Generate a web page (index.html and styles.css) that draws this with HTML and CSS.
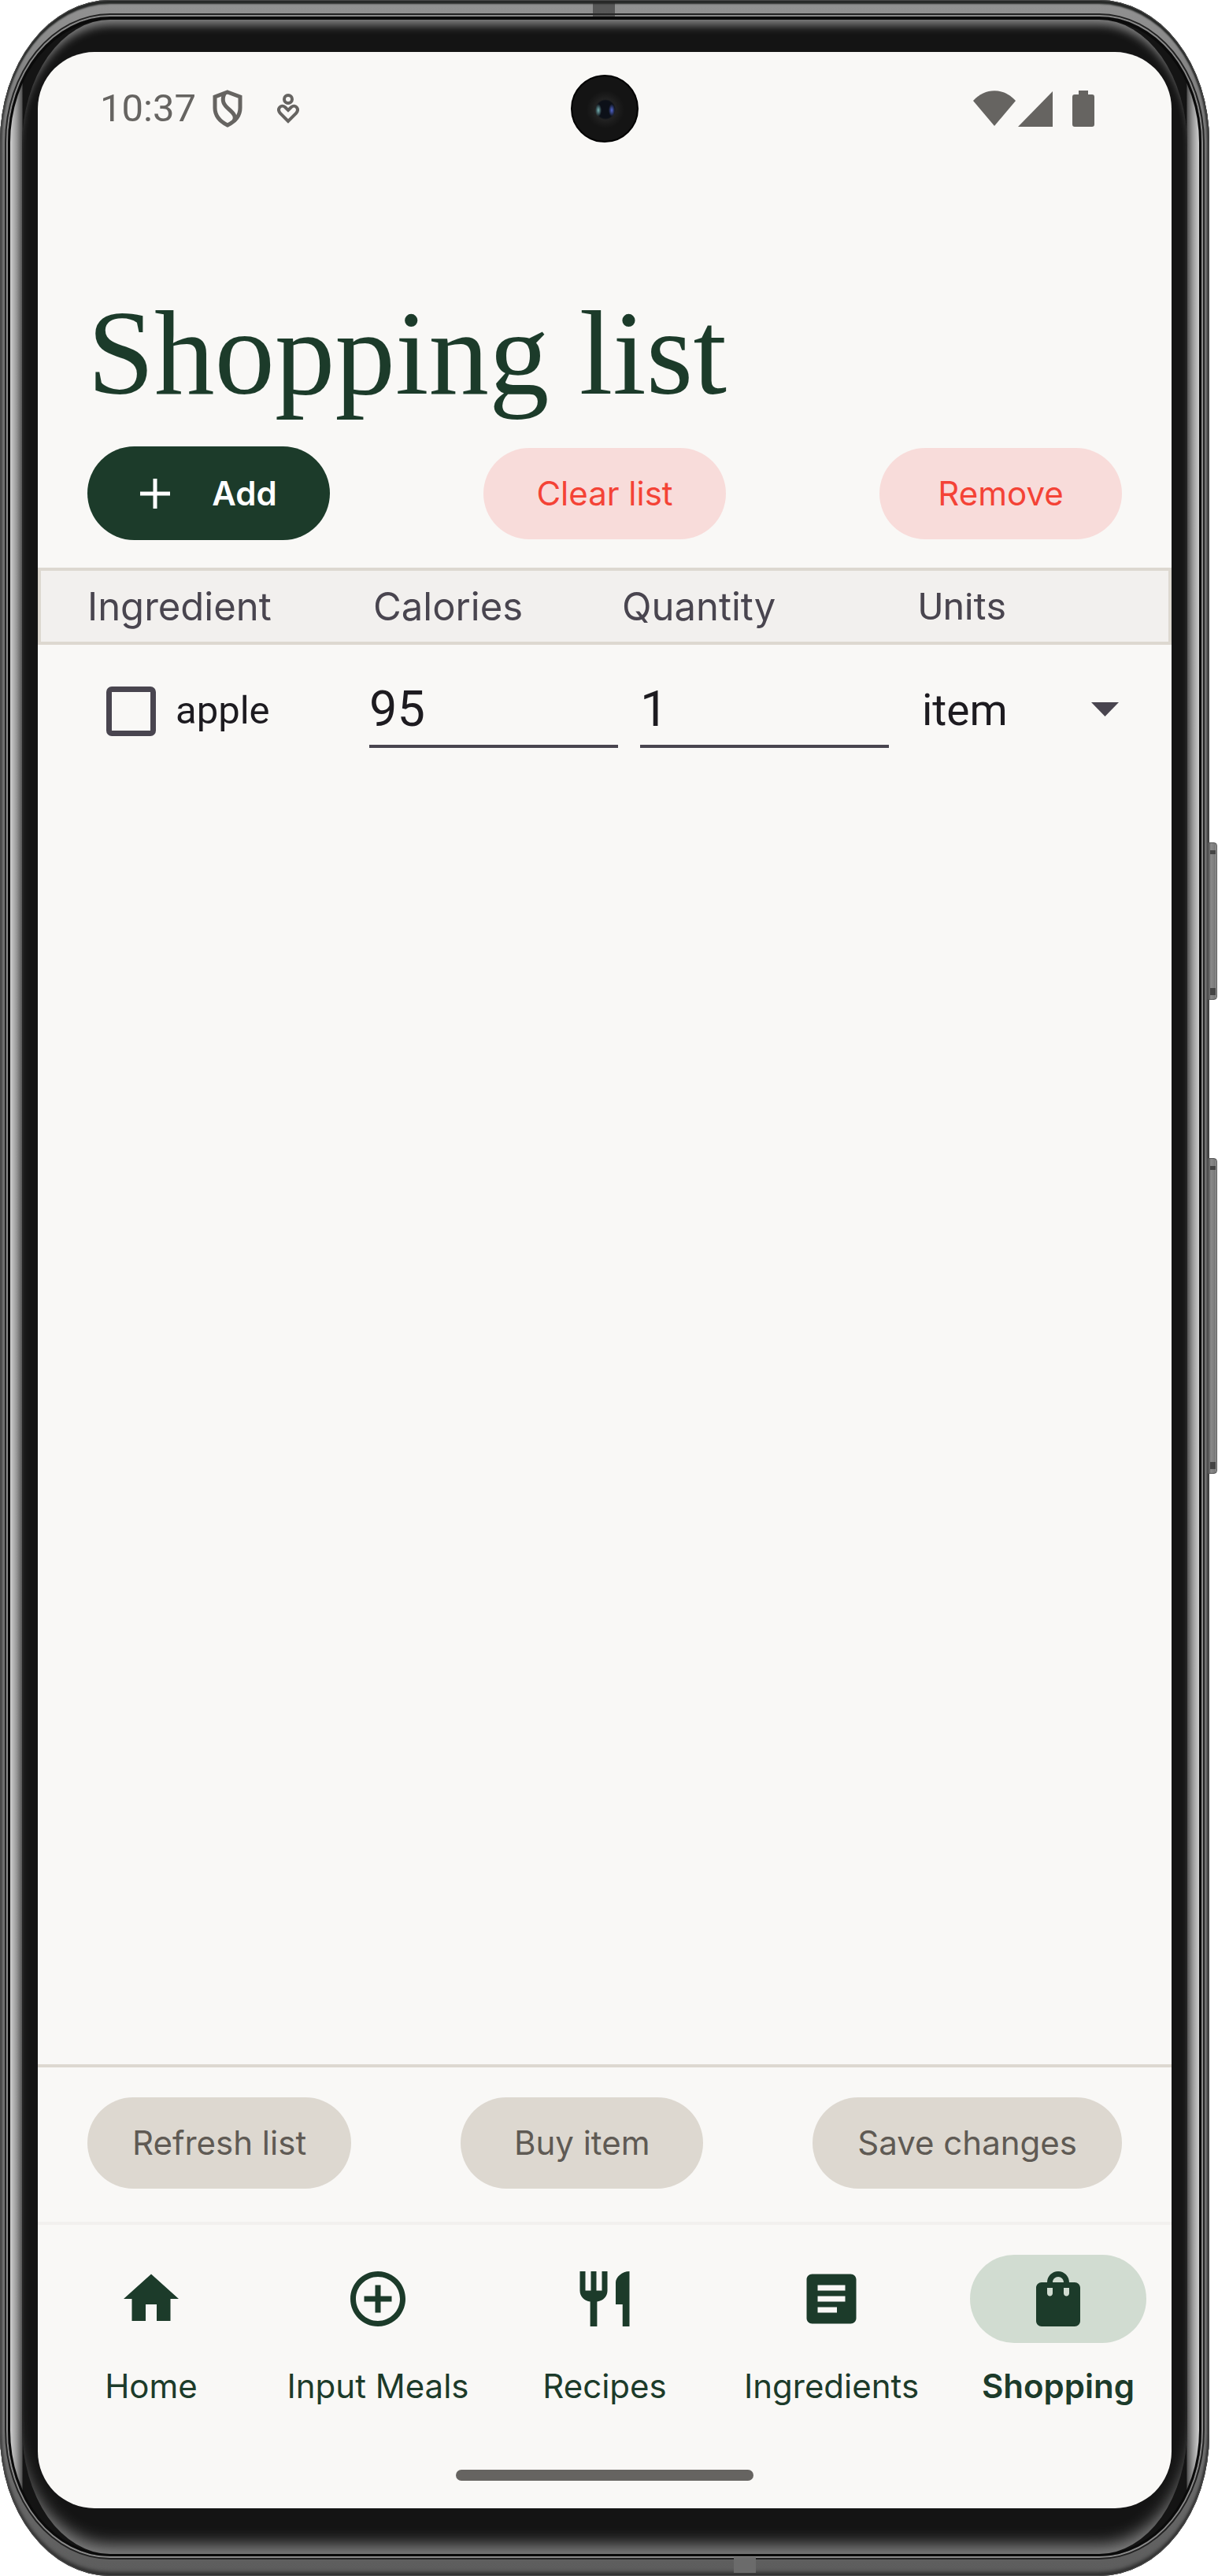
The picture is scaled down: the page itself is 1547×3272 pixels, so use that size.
FILE: index.html
```html
<!DOCTYPE html>
<html lang="en">
<head>
<meta charset="utf-8">
<meta name="viewport" content="width=device-width, initial-scale=1">
<title>Shopping list</title>
<link rel="stylesheet" href="styles.css">
</head>
<body>
<div class="phone">
  <span class="band band-top"></span>
  <span class="band band-bottom"></span>
  <span class="side-button side-power"></span>
  <span class="side-button side-volume"></span>
  <div class="bezel">
    <div class="glass">
      <div class="screen">
        <span class="camera"></span>

        <div class="status">
          <div class="status-group">
            <span class="clock">10:37</span>
            <svg class="icon-shield" viewBox="0 0 40 48" aria-hidden="true">
              <path d="M20 3 L36 9 V23 C36 34 28 41 20 45 C12 41 4 34 4 23 V9 Z" fill="none" stroke="currentColor" stroke-width="5"/>
              <path d="M16 5 C12 14 15 19 22 25 C29 31 31 35 28 40" fill="none" stroke="currentColor" stroke-width="5"/>
            </svg>
            <svg class="icon-heart" viewBox="0 0 28 40" aria-hidden="true" fill="none" stroke="currentColor" stroke-width="4">
              <circle cx="14" cy="8" r="5"/>
              <path d="M14 36 L4 26 C-1 20 5 14 10 18 L14 22 L18 18 C23 14 29 20 24 26 Z"/>
            </svg>
          </div>
          <div class="status-group status-right">
            <svg class="icon-wifi" viewBox="0 0 54 46" aria-hidden="true"><path d="M0 13 C15 -4 39 -4 54 13 L27 45 Z" fill="currentColor"/></svg>
            <svg class="icon-signal" viewBox="0 0 44 46" aria-hidden="true"><path d="M44 1 V46 H0 Z" fill="currentColor"/></svg>
            <svg class="icon-battery" viewBox="0 0 28 46" aria-hidden="true"><path d="M8 0 H20 V5 H25 Q28 5 28 8 V43 Q28 46 25 46 H3 Q0 46 0 43 V8 Q0 5 3 5 H8 Z" fill="currentColor"/></svg>
          </div>
        </div>

        <main>
          <h1>Shopping list</h1>

          <div class="actions">
            <button type="button" class="btn btn-add">
              <svg class="icon-plus" viewBox="0 0 38 38" aria-hidden="true"><path d="M19 0 V38 M0 19 H38" stroke="currentColor" stroke-width="5"/></svg>
              Add
            </button>
            <button type="button" class="btn btn-danger">Clear list</button>
            <button type="button" class="btn btn-danger">Remove</button>
          </div>

          <table class="list">
            <thead>
              <tr><th scope="col">Ingredient</th><th scope="col">Calories</th><th scope="col">Quantity</th><th scope="col" class="head-units">Units</th></tr>
            </thead>
            <tbody>
              <tr>
                <td><label class="pick"><input type="checkbox">apple</label></td>
                <td class="cell-calories"><input class="field" type="text" value="95" aria-label="Calories"></td>
                <td class="cell-quantity"><input class="field" type="text" value="1" aria-label="Quantity"></td>
                <td><div class="unit"><select aria-label="Units"><option>item</option></select></div></td>
              </tr>
            </tbody>
          </table>
        </main>

        <div class="footer-actions">
          <button type="button" class="btn btn-muted">Refresh list</button>
          <button type="button" class="btn btn-muted">Buy item</button>
          <button type="button" class="btn btn-muted">Save changes</button>
        </div>

        <nav>
          <a href="#home"><span class="pill"><svg viewBox="0 0 24 24" aria-hidden="true"><path d="M10 20v-6h4v6h5v-8h3L12 3 2 12h3v8z"/></svg></span>Home</a>
          <a href="#meals"><span class="pill"><svg viewBox="0 0 24 24" aria-hidden="true"><path d="M13 7h-2v4H7v2h4v4h2v-4h4v-2h-4V7zm-1-5C6.480 2 2 6.480 2 12s4.480 10 10 10 10-4.480 10-10S17.520 2 12 2zm0 18c-4.410 0-8-3.590-8-8s3.590-8 8-8 8 3.590 8 8-3.590 8-8 8z"/></svg></span>Input Meals</a>
          <a href="#recipes"><span class="pill"><svg viewBox="0 0 24 24" aria-hidden="true"><path d="M11 9H9V2H7v7H5V2H3v7c0 2.120 1.660 3.840 3.750 3.970V22h2.500v-9.030C11.340 12.840 13 11.120 13 9V2h-2v7zm5-3v8h2.500v8H21V2c-2.760 0-5 2.240-5 4z"/></svg></span>Recipes</a>
          <a href="#ingredients"><span class="pill"><svg viewBox="0 0 24 24" aria-hidden="true"><path d="M19 3H5c-1.100 0-2 .9-2 2v14c0 1.100.9 2 2 2h14c1.100 0 2-.9 2-2V5c0-1.100-.9-2-2-2zm-5 14H7v-2h7v2zm3-4H7v-2h10v2zm0-4H7V7h10v2z"/></svg></span>Ingredients</a>
          <a href="#shopping" class="active" aria-current="page"><span class="pill"><svg viewBox="0 0 24 24" aria-hidden="true"><path d="M18 6h-2c0-2.210-1.790-4-4-4S8 3.790 8 6H6c-1.100 0-2 .9-2 2v12c0 1.100.9 2 2 2h12c1.100 0 2-.9 2-2V8c0-1.100-.9-2-2-2zm-8 4c0 .55-.45 1-1 1s-1-.45-1-1V8h2v2zm2-6c1.100 0 2 .9 2 2h-4c0-1.100.9-2 2-2zm4 6c0 .55-.45 1-1 1s-1-.45-1-1V8h2v2z"/></svg></span>Shopping</a>
        </nav>
        <div class="gesture"></div>
      </div>
    </div>
  </div>
</div>
</body>
</html>
```
FILE: styles.css
```css
:root {
  --paper: #f9f8f6;
  --green: #1c3b2a;
  --line: #ddd8d0;
  --slate: #49454f;
  --ink: #1d1b20;
  --status: #666461;
  --gutter: 63px;
}

* { box-sizing: border-box; }

body {
  margin: 0;
  padding-right: 11px;
  min-height: 100vh;
  display: flex;
  background: #fff;
  font-family: Inter, "Liberation Sans", sans-serif;
  font-size: 42px;
  line-height: 50px;
}

button, input, select { font: inherit; margin: 0; }

/* Device body */
.phone {
  position: relative;
  flex: 1;
  display: flex;
  padding: 21px 10px 25px;
  border-radius: 140px / 180px;
  background: linear-gradient(#929292, #747474 200px, #747474 calc(100% - 200px), #5c5c5c);
  box-shadow:
    inset 0 0 0 1px #4a4a4a,
    inset 0 5px 2px #262827,
    inset 0 -5px 4px #303030,
    inset -3px 0 2px #444,
    inset 3px 0 2px #555;
}

.bezel {
  flex: 1;
  display: flex;
  border: solid #0a0a0a;
  border-width: 4px 3px 3px;
  border-radius: 130px / 160px;
  background: linear-gradient(90deg, #d0d0d0, #999 8px, #555 15px, #141414 16px, #141414 calc(100% - 16px), #555 calc(100% - 15px), #999 calc(100% - 8px), #d0d0d0);
  box-shadow: 0 0 0 2px #8a8a8a, 0 0 0 4px #222;
}

.glass {
  flex: 1;
  display: flex;
  margin: 0 15px;
  padding: 41px 20px 58px;
  border-radius: 112px / 160px;
  background: #141414;
  box-shadow:
    inset 0 15px 12px -8px #808080,
    inset 0 -24px 20px -12px #808080;
}

.band {
  position: absolute;
  width: 28px;
  height: 20px;
  background: rgba(40, 40, 40, .55);
}
.band-top { top: 1px; left: 753px; }
.band-bottom { bottom: 4px; left: 932px; background: #6b6b6b; }

.side-button {
  position: absolute;
  right: -10px;
  width: 12px;
  border-radius: 0 4px 4px 0;
  border: 1px solid #555;
  background: linear-gradient(90deg, #555, #8a8a8a 3px, #777 9px, #bbb);
}
.side-button::before, .side-button::after {
  content: "";
  position: absolute;
  left: 2px;
  width: 7px;
  height: 5px;
  background: #444;
}
.side-button::before { top: 9px; }
.side-button::after { bottom: 5px; height: 9px; }
.side-power { top: 1070px; height: 200px; }
.side-volume { top: 1471px; height: 401px; }

.screen {
  position: relative;
  flex: 1;
  min-width: 0;
  display: flex;
  flex-direction: column;
  border-radius: 72px;
  background: var(--paper);
  color: var(--green);
}

.camera {
  position: absolute;
  top: 29px;
  left: calc(50% - 43px);
  width: 86px;
  height: 86px;
  border: 2px solid #000;
  border-radius: 50%;
  background:
    radial-gradient(ellipse 4px 8px at 33px 43px, #78b4b4, transparent),
    radial-gradient(ellipse 4px 8px at 50px 43px, #5468d0, transparent),
    radial-gradient(circle at 42px 42px, #0c1018 11px, #222 13px, #1b1b1b 18px, #141414 24px);
}

/* Status bar */
.status {
  display: flex;
  justify-content: space-between;
  align-items: center;
  height: 144px;
  padding: 0 98px 0 79px;
  color: var(--status);
}
.status-group { display: flex; align-items: center; }
.status-right { gap: 3px; }
.clock { font-family: Roboto, sans-serif; font-size: 49px; }
.icon-shield { width: 40px; height: 48px; margin-left: 20px; }
.icon-heart { width: 28px; height: 40px; margin-left: 43px; }
.icon-wifi { width: 54px; height: 46px; }
.icon-signal { width: 44px; height: 46px; }
.icon-battery { width: 28px; height: 46px; margin-left: 22px; }

/* Content */
main { flex: 1; }

h1 {
  margin: 0;
  padding: 159px var(--gutter) 38px;
  font-family: "Liberation Serif", serif;
  font-size: 153px;
  font-weight: 400;
  line-height: 160px;
}

.actions, .footer-actions {
  display: flex;
  justify-content: space-between;
  align-items: center;
  padding: 0 var(--gutter);
}
.actions { padding-bottom: 35px; }
.footer-actions {
  padding-top: 38px;
  padding-bottom: 42px;
  border-top: 4px solid var(--line);
}

.btn {
  display: flex;
  align-items: center;
  justify-content: center;
  min-width: 308px;
  height: 116px;
  padding: 0 57px;
  border: 0;
  border-radius: 60px;
}
.btn-add {
  gap: 53px;
  height: 119px;
  background: var(--green);
  color: #fff;
  font-weight: 600;
}
.icon-plus { width: 38px; height: 38px; }
.btn-danger { background: #f8dcda; color: #f44336; }
.btn-muted { background: var(--line); color: #5f5a54; }

/* Ingredient table */
.list, .list thead, .list tbody { display: block; }
.list tr { display: grid; }
.list td, .list th { padding: 0; text-align: left; font-weight: 400; }
.list thead tr {
  grid-template-columns: 363fr 316fr 376fr 259fr;
  padding: 16px 59px 15px;
  border: 4px solid var(--line);
  background: #f2f0ee;
  color: var(--slate);
  font-size: 49px;
  line-height: 59px;
}
.list .head-units { font-family: Roboto, sans-serif; }
.list tbody { color: var(--ink); font-family: Roboto, sans-serif; }
.list tbody tr {
  grid-template-columns: 358fr 344fr 358fr 254fr;
  padding: 41px var(--gutter);
}
.list td { min-width: 0; }

.pick {
  display: flex;
  align-items: center;
  gap: 25px;
  height: 86px;
  padding-left: 24px;
  font-size: 49px;
}
.pick input {
  appearance: none;
  width: 63px;
  height: 63px;
  border: 7px solid var(--slate);
  border-radius: 7px;
}
.list .cell-calories { padding-right: 28px; }
.list .cell-quantity { padding-right: 42px; }
.field {
  display: block;
  width: 100%;
  height: 90px;
  padding: 0 0 6px;
  border: 0;
  border-bottom: 4px solid var(--slate);
  background: none;
  color: inherit;
  font-size: 63px;
}
.unit { position: relative; }
.unit::after {
  content: "";
  position: absolute;
  top: 32px;
  right: 4px;
  width: 35px;
  height: 18px;
  background: var(--slate);
  clip-path: polygon(0 0, 100% 0, 50% 100%);
  pointer-events: none;
}
.unit select {
  appearance: none;
  display: block;
  width: 100%;
  height: 84px;
  padding: 0;
  border: 0;
  background: none;
  color: inherit;
  font-size: 55px;
}

/* Bottom navigation */
nav {
  display: grid;
  grid-template-columns: repeat(5, 1fr);
  padding-top: 38px;
  border-top: 4px solid #f2f0ee;
}
nav a {
  display: flex;
  flex-direction: column;
  align-items: center;
  gap: 30px;
  color: inherit;
  text-decoration: none;
  white-space: nowrap;
}
.pill {
  display: flex;
  align-items: center;
  justify-content: center;
  width: 224px;
  height: 112px;
  border-radius: 56px;
}
.pill svg { width: 84px; height: 84px; fill: currentColor; }
.active { font-weight: 600; }
.active .pill { background: #d1dcd1; }

.gesture {
  align-self: center;
  width: 378px;
  height: 14px;
  margin: 81px 0 35px;
  border-radius: 7px;
  background: var(--status);
}
```
